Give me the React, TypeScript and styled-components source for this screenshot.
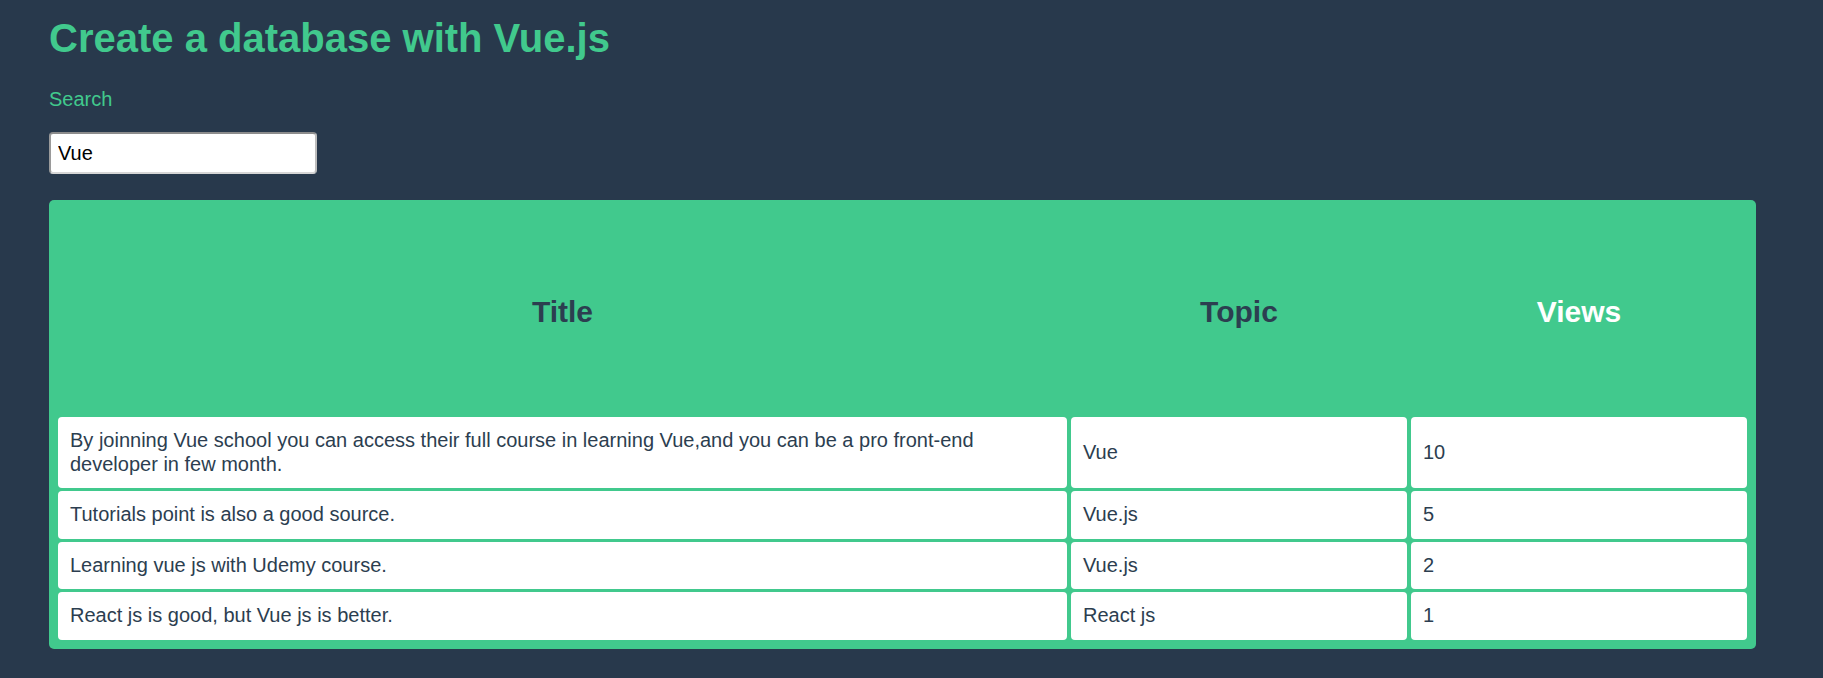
import React, { useState } from "react";
import styled, { createGlobalStyle } from "styled-components";

const GlobalStyle = createGlobalStyle`
  html, body {
    margin: 0;
    padding: 0;
    background: #28394c;
  }
  body {
    font-family: "Liberation Sans", Arial, sans-serif;
    font-size: 20px;
    color: #2c3e50;
  }
`;

const Page = styled.div`
  display: flex;
  flex-direction: column;
  align-items: flex-start;
  padding: 16px 0 30px 49px;
  min-height: 678px;
  box-sizing: border-box;
`;

const Heading = styled.h1`
  margin: 0 0 27px;
  font-size: 40px;
  font-weight: bold;
  line-height: normal;
  color: #41c98d;
`;

const Label = styled.label`
  display: block;
  margin: 0 0 21px;
  font-size: 20px;
  line-height: normal;
  color: #41c98d;
`;

const SearchInput = styled.input`
  box-sizing: border-box;
  width: 268px;
  height: 42px;
  margin: 0 0 26px;
  padding: 0 7px;
  border: 2px solid;
  border-color: #8c8c8c #bdbdbd #d6d6d6 #9a9a9a;
  border-radius: 4px;
  background: #fff;
  font-family: "Liberation Sans", Arial, sans-serif;
  font-size: 20px;
  color: #000;
  outline: none;
`;

const TableCard = styled.div`
  box-sizing: border-box;
  width: 1707px;
  padding: 6px 5px;
  background: #41c98d;
  border-radius: 5px;
`;

const Table = styled.table`
  width: 100%;
  table-layout: fixed;
  border-collapse: separate;
  border-spacing: 4px 3px;
`;

const Col = styled.col<{ $w: number }>`
  width: ${(p) => p.$w}px;
`;

const HeadCell = styled.th<{ $active?: boolean }>`
  padding: 85px 12px;
  font-size: 30px;
  font-weight: bold;
  line-height: 35px;
  text-align: center;
  color: ${(p) => (p.$active ? "#ffffff" : "#2c3e50")};
`;

const Cell = styled.td`
  padding: 12px;
  background: #ffffff;
  border-radius: 4px;
  font-size: 20px;
  line-height: 23.5px;
  color: #2c3e50;
  vertical-align: middle;
  text-align: left;
`;

type Row = { title: string; topic: string; views: number };

const rows: Row[] = [
  {
    title:
      "By joinning Vue school you can access their full course in learning Vue,and you can be a pro front-end developer in few month.",
    topic: "Vue",
    views: 10,
  },
  { title: "Tutorials point is also a good source.", topic: "Vue.js", views: 5 },
  { title: "Learning vue js with Udemy course.", topic: "Vue.js", views: 2 },
  { title: "React js is good, but Vue js is better.", topic: "React js", views: 1 },
];

export default function App() {
  const [query, setQuery] = useState("Vue");
  return (
    <>
      <GlobalStyle />
      <Page>
        <Heading>Create a database with Vue.js</Heading>
        <Label htmlFor="search">Search</Label>
        <SearchInput
          id="search"
          value={query}
          onChange={(e) => setQuery(e.target.value)}
        />
        <TableCard>
          <Table>
            <colgroup>
              <Col $w={1009} />
              <Col $w={336} />
              <Col $w={336} />
            </colgroup>
            <thead>
              <tr>
                <HeadCell>Title</HeadCell>
                <HeadCell>Topic</HeadCell>
                <HeadCell $active>Views</HeadCell>
              </tr>
            </thead>
            <tbody>
              {rows.map((r) => (
                <tr key={r.title}>
                  <Cell>{r.title}</Cell>
                  <Cell>{r.topic}</Cell>
                  <Cell>{r.views}</Cell>
                </tr>
              ))}
            </tbody>
          </Table>
        </TableCard>
      </Page>
    </>
  );
}
